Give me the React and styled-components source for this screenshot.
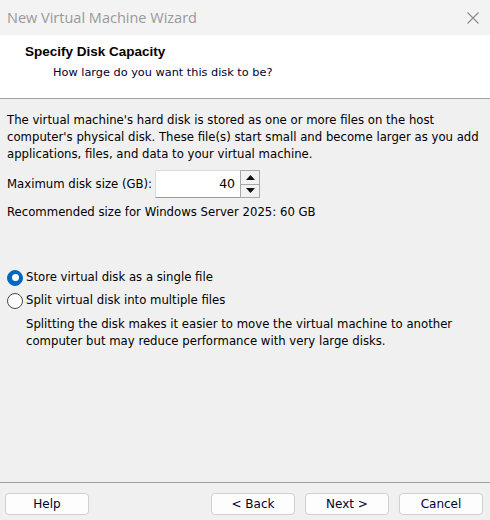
import styled, { createGlobalStyle } from "styled-components";

const Global = createGlobalStyle`
  html, body {
    margin: 0;
    padding: 0;
    background: #f0f0f0;
  }
  body {
    font-family: Tahoma, "DejaVu Sans", "Liberation Sans", sans-serif;
  }
`;

const Window = styled.div`
  width: 490px;
  height: 520px;
  display: flex;
  flex-direction: column;
  background: #f0f0f0;
  color: #000;
  font-size: 11.7px;
  overflow: hidden;
`;

const TitleBar = styled.div`
  height: 35px;
  flex: none;
  display: flex;
  align-items: center;
  justify-content: space-between;
  padding: 0 11px 0 7px;
  background: #f3f3f3;
  font-family: "Open Sans", "Noto Sans", sans-serif;
  font-size: 14.5px;
  color: #999999;
`;

const Header = styled.div`
  height: 64px;
  flex: none;
  background: #fff;
  border-bottom: 1px solid #a0a0a0;
  padding: 8px 0 0 25px;
  box-sizing: border-box;
`;

const HeaderTitle = styled.div`
  font-family: "Liberation Sans", Arial, sans-serif;
  font-weight: bold;
  font-size: 13.5px;
  height: 17px;
  line-height: 17px;
`;

const HeaderSub = styled.div`
  padding-left: 28px;
  margin-top: 4px;
  line-height: 17px;
  font-size: 11.3px;
  color: #000030;
`;

const Body = styled.div`
  flex: 1;
  padding: 13px 7px 0 7px;
  line-height: 17px;
`;

const Para = styled.p`
  margin: 0;
  white-space: nowrap;
`;

const SizeRow = styled.div`
  display: flex;
  align-items: center;
  gap: 3px;
  margin-top: 7px;
`;

const Spinner = styled.div`
  display: flex;
  height: 28px;
  box-sizing: border-box;
`;

const NumberBox = styled.div`
  width: 85px;
  box-sizing: border-box;
  background: #fff;
  border: 1px solid #dcdcdc;
  border-bottom-color: #9a9a9a;
  border-right: none;
  text-align: right;
  padding: 0 5px;
  line-height: 26px;
  font-size: 12.5px;
`;

const Arrows = styled.div`
  width: 20px;
  display: flex;
  flex-direction: column;
  border: 1px solid #a8a8a8;
  box-sizing: border-box;
  background: #e8e8e8;
`;

const Arrow = styled.div`
  flex: 1;
  display: flex;
  align-items: center;
  justify-content: center;
  background: #f2f2f2;
  border-top: ${(p) => (p.down ? "1px solid #a8a8a8" : "none")};
`;

const Recommended = styled.div`
  margin-top: 6px;
`;

const Options = styled.div`
  margin-top: 48px;
  display: flex;
  flex-direction: column;
  gap: 6px;
`;

const RadioRow = styled.label`
  display: flex;
  align-items: center;
  gap: 3px;
  height: 17px;
`;

const RadioDot = styled.span`
  width: 16px;
  height: 16px;
  box-sizing: border-box;
  border-radius: 50%;
  flex: none;
  background: ${(p) => (p.checked ? "#0067c0" : "#fff")};
  border: 1px solid ${(p) => (p.checked ? "#0067c0" : "#4a4a4a")};
  display: flex;
  align-items: center;
  justify-content: center;
  &::after {
    content: "";
    display: ${(p) => (p.checked ? "block" : "none")};
    width: 7px;
    height: 7px;
    border-radius: 50%;
    background: #fff;
  }
`;

const Note = styled.div`
  padding-left: 19px;
  margin-top: 7px;
  white-space: nowrap;
`;

const Footer = styled.div`
  height: 38px;
  flex: none;
  box-sizing: border-box;
  border-top: 1px solid #a0a0a0;
  display: flex;
  align-items: flex-start;
  padding: 10px 7px 0 5px;
  gap: 10px;
`;

const Spacer = styled.div`
  flex: 1;
`;

const Button = styled.button`
  width: 84px;
  height: 22px;
  box-sizing: border-box;
  background: #fdfdfd;
  border: 1px solid #d0d0d0;
  border-radius: 4px;
  font-family: inherit;
  font-size: 12px;
  color: #000030;
  padding: 0;
`;

function Tri({ down }) {
  return (
    <svg width="9" height="5" viewBox="0 0 9 5">
      <path d={down ? "M0 0h9L4.5 5z" : "M0 5h9L4.5 0z"} fill="#111" />
    </svg>
  );
}

export default function App() {
  return (
    <>
      <Global />
      <Window>
        <TitleBar>
          <span>New Virtual Machine Wizard</span>
          <svg width="12" height="12" viewBox="0 0 12 12">
            <path d="M0.5 0.5L11.5 11.5M11.5 0.5L0.5 11.5" stroke="#8a8a8a" strokeWidth="1.1" />
          </svg>
        </TitleBar>
        <Header>
          <HeaderTitle>Specify Disk Capacity</HeaderTitle>
          <HeaderSub>How large do you want this disk to be?</HeaderSub>
        </Header>
        <Body>
          <Para>
            The virtual machine's hard disk is stored as one or more files on the host
            <br />
            computer's physical disk. These file(s) start small and become larger as you add
            <br />
            applications, files, and data to your virtual machine.
          </Para>
          <SizeRow>
            <span>Maximum disk size (GB):</span>
            <Spinner>
              <NumberBox>40</NumberBox>
              <Arrows>
                <Arrow>
                  <Tri />
                </Arrow>
                <Arrow down>
                  <Tri down />
                </Arrow>
              </Arrows>
            </Spinner>
          </SizeRow>
          <Recommended>Recommended size for Windows Server 2025: 60 GB</Recommended>
          <Options>
            <RadioRow>
              <RadioDot checked />
              Store virtual disk as a single file
            </RadioRow>
            <RadioRow>
              <RadioDot />
              Split virtual disk into multiple files
            </RadioRow>
          </Options>
          <Note>
            Splitting the disk makes it easier to move the virtual machine to another
            <br />
            computer but may reduce performance with very large disks.
          </Note>
        </Body>
        <Footer>
          <Button>Help</Button>
          <Spacer />
          <Button>&lt; Back</Button>
          <Button>Next &gt;</Button>
          <Button>Cancel</Button>
        </Footer>
      </Window>
    </>
  );
}
